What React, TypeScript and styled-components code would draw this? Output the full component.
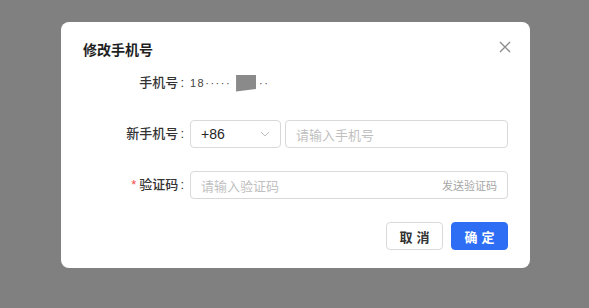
import styled, { createGlobalStyle } from "styled-components"

const Global = createGlobalStyle`
  html, body { margin: 0; height: 100%; }
  body {
    background: #808080;
    font-family: "Liberation Sans", "Noto Sans CJK SC", sans-serif;
    color: #262626;
  }
`

const Backdrop = styled.div`
  padding: 22px 0 0 61px;
`

const Modal = styled.div`
  position: relative;
  width: 469px;
  height: 246px;
  box-sizing: border-box;
  background: #fff;
  border-radius: 8px;
  padding: 17px 22px 18px 22px;
  display: flex;
  flex-direction: column;
`

const Title = styled.div`
  font-size: 14px;
  font-weight: 700;
  line-height: 22px;
  color: #1f1f1f;
`

const Close = styled.button`
  position: absolute;
  top: 17px;
  right: 17px;
  width: 16px;
  height: 16px;
  padding: 0;
  border: 0;
  background: none;
  cursor: pointer;
  display: flex;
`

const Form = styled.div`
  display: flex;
  flex-direction: column;
  margin-top: 11px;
`

const Row = styled.div<{ $gap: number }>`
  display: flex;
  align-items: center;
  margin-top: ${({ $gap }) => $gap}px;
`

const Label = styled.div`
  width: 107px;
  flex: none;
  text-align: right;
  padding-right: 6px;
  box-sizing: border-box;
  font-size: 13px;
  font-weight: 500;
  color: #333;
  line-height: 22px;
`

const Colon = styled.span`
  margin-left: 2px;
`

const Star = styled.span`
  color: #f04b4b;
  margin-right: 3px;
`

const Masked = styled.div`
  display: flex;
  align-items: center;
  height: 22px;
  font-size: 11px;
  color: #444;
  letter-spacing: 1.5px;
`

const Block = styled.span`
  display: inline-block;
  width: 20px;
  height: 17px;
  background: #8a8a8a;
  margin: 0 3px 0 5px;
  clip-path: polygon(0 0, 100% 0, 100% 85%, 0 100%);
`

const Field = styled.div<{ $w: number }>`
  width: ${({ $w }) => $w}px;
  height: 28px;
  box-sizing: border-box;
  border: 1px solid #d9d9d9;
  border-radius: 4px;
  display: flex;
  align-items: center;
  padding: 0 10px;
  font-size: 13px;
`

const Value = styled.span`
  flex: 1;
  color: #262626;
  font-size: 14px;
`

const Placeholder = styled.span`
  flex: 1;
  color: #bfbfbf;
`

const Suffix = styled.span`
  color: #a6a6a6;
  font-size: 11px;
`

const Footer = styled.div`
  display: flex;
  justify-content: flex-end;
  gap: 8px;
  margin-top: 23px;
`

const Button = styled.button<{ $primary?: boolean }>`
  width: 57px;
  height: 28px;
  border-radius: 4px;
  font-family: inherit;
  font-size: 13px;
  font-weight: 600;
  letter-spacing: 4px;
  padding: 0 0 0 4px;
  border: 1px solid ${({ $primary }) => ($primary ? "#2e6ef5" : "#d9d9d9")};
  background: ${({ $primary }) => ($primary ? "#2e6ef5" : "#fff")};
  color: ${({ $primary }) => ($primary ? "#fff" : "#333")};
`

export default function App() {
  return (
    <Backdrop>
      <Global />
      <Modal>
        <Title>修改手机号</Title>
        <Close aria-label="close">
          <svg width="16" height="16" viewBox="0 0 16 16">
            <path d="M3 3 L13 13 M13 3 L3 13" stroke="#8c8c8c" strokeWidth="1.4" />
          </svg>
        </Close>
        <Form>
          <Row $gap={0}>
            <Label>
              手机号<Colon>:</Colon>
            </Label>
            <Masked>
              18·····<Block />··
            </Masked>
          </Row>
          <Row $gap={26}>
            <Label>
              新手机号<Colon>:</Colon>
            </Label>
            <Field $w={91}>
              <Value>+86</Value>
              <svg width="10" height="6" viewBox="0 0 10 6">
                <path d="M1 1 L5 5 L9 1" fill="none" stroke="#bfbfbf" strokeWidth="1" />
              </svg>
            </Field>
            <Field $w={223} style={{ marginLeft: 4 }}>
              <Placeholder>请输入手机号</Placeholder>
            </Field>
          </Row>
          <Row $gap={23}>
            <Label>
              <Star>*</Star>验证码<Colon>:</Colon>
            </Label>
            <Field $w={318}>
              <Placeholder>请输入验证码</Placeholder>
              <Suffix>发送验证码</Suffix>
            </Field>
          </Row>
        </Form>
        <Footer>
          <Button>取消</Button>
          <Button $primary>确定</Button>
        </Footer>
      </Modal>
    </Backdrop>
  )
}
